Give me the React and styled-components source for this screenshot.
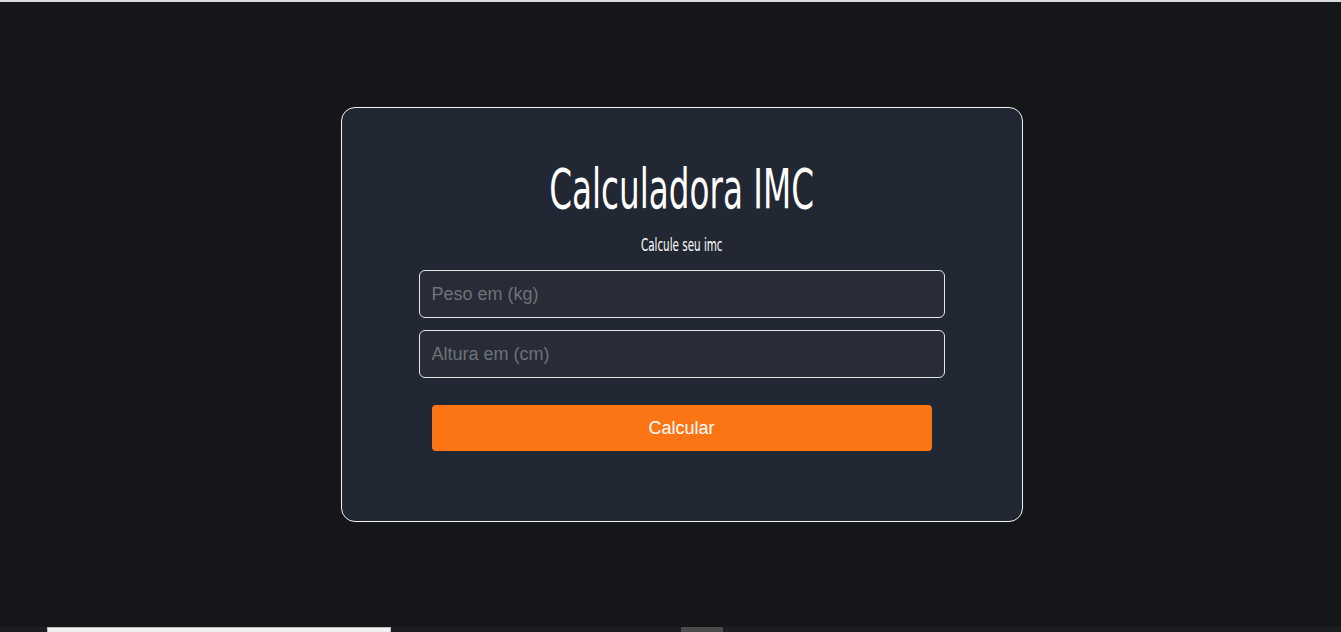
import React from 'react'
import styled, { createGlobalStyle } from 'styled-components'

const GlobalStyle = createGlobalStyle`
  html, body {
    margin: 0;
    padding: 0;
    background: #15161a;
  }
  body {
    font-family: "Liberation Sans", Arial, sans-serif;
  }
`

const Page = styled.div`
  display: flex;
  flex-direction: column;
  height: 632px;
  overflow: hidden;
`

const TopLine = styled.div`
  height: 2px;
  background: #dcdcdc;
`

const Main = styled.main`
  flex: 1;
  display: flex;
  align-items: center;
  justify-content: center;
  padding-left: 22px;
`

const Card = styled.div`
  width: 682px;
  height: 415px;
  box-sizing: border-box;
  background: #222833;
  border: 1px solid #f2f2f2;
  border-radius: 14px;
  display: flex;
  flex-direction: column;
  align-items: center;
  padding-top: 49px;
`

// condensed display face (the original looks like Oswald)
const Title = styled.h1`
  margin: 0;
  font-family: "DejaVu Sans Condensed", "Liberation Sans", sans-serif;
  font-weight: 400;
  font-size: 55px;
  line-height: 64px;
  color: #ffffff;
  white-space: nowrap;
  transform: scaleX(0.66);
`

const Subtitle = styled.p`
  margin: 14px 0 15px;
  font-family: "DejaVu Sans Condensed", "Liberation Sans", sans-serif;
  font-size: 18px;
  line-height: 20px;
  color: #ffffff;
  white-space: nowrap;
  transform: scaleX(0.64);
`

const Form = styled.form`
  display: flex;
  flex-direction: column;
  align-items: center;
  gap: 12px;
`

const Input = styled.input`
  width: 526px;
  height: 48px;
  box-sizing: border-box;
  padding: 0 12px;
  background: #272c36;
  border: 1px solid #e6e6e6;
  border-radius: 6px;
  color: #ffffff;
  font-family: "Liberation Sans", Arial, sans-serif;
  font-size: 18px;
  outline: none;

  &::placeholder {
    color: #6e7279;
  }
`

const Button = styled.button`
  margin-top: 15px;
  width: 500px;
  height: 46px;
  border: none;
  border-radius: 4px;
  background: #fc7514;
  color: #ffffff;
  font-family: "Liberation Sans", Arial, sans-serif;
  font-size: 18px;
  cursor: pointer;
`

const Taskbar = styled.div`
  height: 5px;
  background: #1d1e20;
  display: flex;
  align-items: flex-end;
`

const TaskItem = styled.div`
  margin-left: ${({ $left }) => $left}px;
  width: ${({ $width }) => $width}px;
  height: ${({ $height }) => $height}px;
  background: ${({ $color }) => $color};
  border: ${({ $border }) => ($border ? '1px solid #bdbdbd' : 'none')};
  border-bottom: none;
  box-sizing: border-box;
`

const App = () => {
  return (
    <>
      <GlobalStyle />
      <Page>
        <TopLine />
        <Main>
          <Card>
            <Title>Calculadora IMC</Title>
            <Subtitle>Calcule seu imc</Subtitle>
            <Form onSubmit={(e) => e.preventDefault()}>
              <Input type="number" placeholder="Peso em (kg)" />
              <Input type="number" placeholder="Altura em (cm)" />
              <Button type="submit">Calcular</Button>
            </Form>
          </Card>
        </Main>
        <Taskbar>
          <TaskItem $left={47} $width={344} $height={5} $color="#f0f0f0" $border />
          <TaskItem $left={290} $width={42} $height={5} $color="#4a4a4a" />
        </Taskbar>
      </Page>
    </>
  )
}

export default App
